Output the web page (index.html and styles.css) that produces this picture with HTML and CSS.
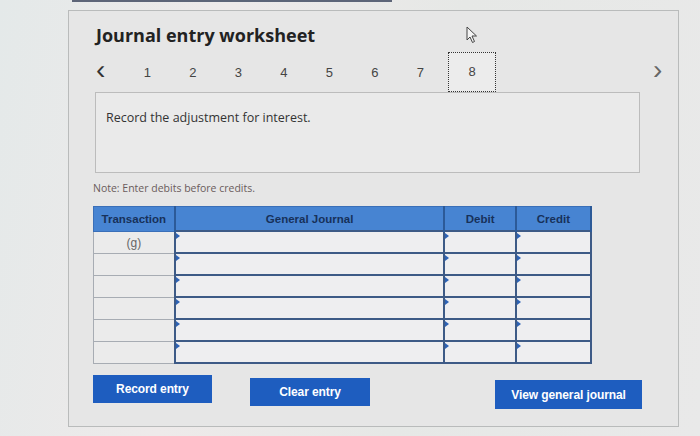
FILE: index.html
```html
<!DOCTYPE html>
<html>
<head>
<meta charset="utf-8">
<link rel="stylesheet" href="styles.css">
</head>
<body>
<div class="topstrip"></div>
<div class="panel">
  <h1 class="title">Journal entry worksheet</h1>
  <div class="nav">
    <span class="arrow prev">&lsaquo;</span>
    <span class="step">1</span>
    <span class="step">2</span>
    <span class="step">3</span>
    <span class="step">4</span>
    <span class="step">5</span>
    <span class="step">6</span>
    <span class="step">7</span>
    <span class="step current">8</span>
    <span class="arrow next">&rsaquo;</span>
    <svg class="cursor" width="12" height="18" viewBox="0 0 12 18"><path d="M1 1 L1 14 L4 11 L6.5 16.5 L8.5 15.5 L6 10 L10.5 10 Z" fill="#f4f4f4" stroke="#444" stroke-width="1"/></svg>
  </div>
  <div class="prompt">Record the adjustment for interest.</div>
  <div class="note">Note: Enter debits before credits.</div>
  <table class="journal">
    <thead>
      <tr><th class="c-tr">Transaction</th><th class="c-gj">General Journal</th><th class="c-dr">Debit</th><th class="c-cr">Credit</th></tr>
    </thead>
    <tbody>
      <tr><td class="tr">(g)</td><td class="in"></td><td class="in"></td><td class="in"></td></tr>
      <tr><td class="tr"></td><td class="in"></td><td class="in"></td><td class="in"></td></tr>
      <tr><td class="tr"></td><td class="in"></td><td class="in"></td><td class="in"></td></tr>
      <tr><td class="tr"></td><td class="in"></td><td class="in"></td><td class="in"></td></tr>
      <tr><td class="tr"></td><td class="in"></td><td class="in"></td><td class="in"></td></tr>
      <tr><td class="tr"></td><td class="in"></td><td class="in"></td><td class="in"></td></tr>
    </tbody>
  </table>
  <div class="buttons">
    <button class="btn b-record">Record entry</button>
    <button class="btn b-clear">Clear entry</button>
    <button class="btn b-view">View general journal</button>
  </div>
</div>
</body>
</html>
```
FILE: styles.css
```css
html, body {
  margin: 0;
  padding: 0;
}
body {
  width: 700px;
  height: 436px;
  overflow: hidden;
  background: linear-gradient(100deg, #e4e9e9 0%, #eeeaea 30%, #e6e8e6 60%, #e9e9e9 100%);
  font-family: "Open Sans", "DejaVu Sans", sans-serif;
  position: relative;
}
.topstrip {
  position: absolute;
  left: 72px;
  top: 0;
  width: 320px;
  height: 2px;
  background: #5d6578;
}
.panel {
  margin: 10px 0 0 68px;
  width: 611px;
  height: 417px;
  border: 1px solid #b9bbbb;
  background: #e6e6e6;
  box-sizing: border-box;
  padding: 0 0 0 25px;
}
.title {
  margin: 0 0 0 2px;
  padding-top: 12px;
  font-size: 18px;
  font-weight: 700;
  line-height: 24px;
  color: #222;
}
.nav {
  position: relative;
  display: flex;
  align-items: center;
  height: 40px;
  margin-top: 5px;
  font-family: "Liberation Sans", Arial, sans-serif;
}
.nav > span {
  flex-shrink: 0;
}
.arrow {
  font-size: 28px;
  line-height: 28px;
  color: #333;
  width: 20px;
  text-align: left;
  position: relative;
  top: -2px;
}
.prev {
  margin-left: 2px;
  width: 28.5px;
}
.next {
  margin-left: 157px;
  color: #666;
}
.step {
  width: 45.5px;
  text-align: center;
  font-size: 13px;
  color: #444;
}
.step.current {
  width: 46px;
  height: 38px;
  line-height: 38px;
  margin-left: 5px;
  border: 1px dotted #333;
  background: #ececec;
}
.cursor {
  position: absolute;
  left: 372px;
  top: -26px;
}
.prompt {
  width: 545px;
  height: 81px;
  box-sizing: border-box;
  margin-left: 1px;
  border: 1px solid #bcbcbc;
  background: #eaeaea;
  padding: 16px 10px;
  font-size: 12.5px;
  color: #333;
}
.note {
  margin-top: 8px;
  margin-left: -1px;
  font-size: 10.5px;
  color: #6a5c5c;
  line-height: 14px;
}
.journal {
  margin-top: 11px;
  margin-left: -1px;
  border-collapse: collapse;
  width: 499px;
  font-family: "Liberation Sans", Arial, sans-serif;
  font-size: 11.5px;
}
.journal th {
  background: #4784d2;
  color: #17315a;
  font-weight: 700;
  height: 23px;
  padding: 0;
  border: 1px solid #3a6fb8;
  border-right: 2px solid #2c5a98;
  text-align: center;
}
.c-tr { width: 80px; }
.c-gj { width: 272px; }
.c-dr { width: 70px; }
.c-cr { width: 74px; }
.journal td {
  height: 20px;
  padding: 0;
}
.journal td.tr {
  border: 1px solid #a7acb3;
  background: #ebebeb;
  text-align: center;
  color: #666;
  font-size: 12px;
  vertical-align: top;
  padding-top: 4px;
  height: 16px;
}
.journal td.in {
  border: 2px solid #3d5a86;
  background: #eeeef0;
  position: relative;
}
.journal td.in::before {
  content: "";
  position: absolute;
  left: 0;
  top: 1px;
  border-top: 3px solid transparent;
  border-bottom: 3px solid transparent;
  border-left: 4px solid #2d62b4;
}
.buttons {
  display: flex;
  align-items: flex-start;
  margin-top: 11px;
  margin-left: -1px;
}
.btn {
  border: none;
  background: #1e5dbf;
  color: #fff;
  font-family: "Liberation Sans", Arial, sans-serif;
  font-weight: 700;
  font-size: 12px;
  letter-spacing: -0.1px;
  height: 28px;
  padding: 0;
}
.b-record { width: 119px; }
.b-clear { width: 120px; margin-left: 38px; margin-top: 3px; }
.b-view { width: 147px; margin-left: 125px; margin-top: 5px; height: 29px; }
```
